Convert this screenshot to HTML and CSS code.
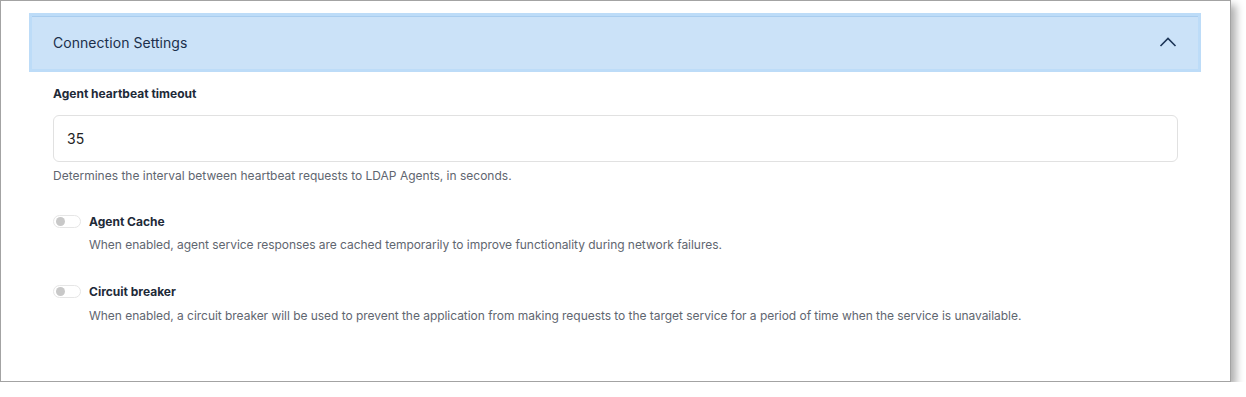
FILE: index.html
```html
<!DOCTYPE html>
<html>
<head>
<meta charset="utf-8">
<link rel="stylesheet" href="styles.css">
</head>
<body>
<div class="frame">
  <div class="panel">
    <div class="header">
      <span class="title">Connection Settings</span>
      <svg class="chevron" width="18" height="12" viewBox="0 0 18 12"><path d="M1.5 10 L9 2.5 L16.5 10" fill="none" stroke="#1d3557" stroke-width="1.6"/></svg>
    </div>
    <div class="body">
      <div class="label">Agent heartbeat timeout</div>
      <div class="input">35</div>
      <div class="help">Determines the interval between heartbeat requests to LDAP Agents, in seconds.</div>
      <div class="toggle-row">
        <div class="toggle-line">
          <span class="switch"><span class="knob"></span></span>
          <span class="toggle-label">Agent Cache</span>
        </div>
        <div class="toggle-desc">When enabled, agent service responses are cached temporarily to improve functionality during network failures.</div>
      </div>
      <div class="toggle-row">
        <div class="toggle-line">
          <span class="switch"><span class="knob"></span></span>
          <span class="toggle-label">Circuit breaker</span>
        </div>
        <div class="toggle-desc">When enabled, a circuit breaker will be used to prevent the application from making requests to the target service for a period of time when the service is unavailable.</div>
      </div>
    </div>
  </div>
</div>
</body>
</html>
```

FILE: styles.css
```css
html, body {
  margin: 0;
  padding: 0;
  background: #ffffff;
}
body {
  font-family: Inter, "Noto Sans", sans-serif;
}
.frame {
  width: 1231px;
  height: 382px;
  box-sizing: border-box;
  border: 1px solid #a3a3a3;
  background: #fff;
  box-shadow: 5px 5px 8px rgba(0,0,0,0.32);
  padding: 12px 0 0 28px;
}
.panel {
  width: 1172px;
}
.header {
  height: 59px;
  box-sizing: border-box;
  background: #cbe2f8;
  border: 3px solid #bddcf8;
  box-shadow: inset 0 1px 0 #a9cdef;
  display: flex;
  align-items: center;
  justify-content: space-between;
  padding: 0 21px 0 21px;
}
.title {
  font-size: 14px;
  color: #1b2f4b;
  letter-spacing: 0.05px;
}
.chevron {
  display: block;
  margin-top: -1px;
}
.body {
  padding: 14px 23px 0 24px;
}
.label {
  font-size: 12px;
  font-weight: 700;
  color: #1e2a38;
  line-height: 16px;
}
.input {
  margin-top: 13px;
  height: 47px;
  box-sizing: border-box;
  border: 1px solid #e1e1e1;
  border-radius: 6px;
  padding: 0 13px;
  display: flex;
  align-items: center;
  font-size: 14px;
  color: #222;
}
.help {
  margin-top: 6px;
  font-size: 12px;
  color: #5f6670;
  line-height: 16px;
}
.toggle-row {
  margin-top: 29px;
}
.toggle-row + .toggle-row {
  margin-top: 30px;
}
.toggle-row + .toggle-row .toggle-desc {
  margin-top: 9px;
}
.toggle-line {
  display: flex;
  align-items: center;
  gap: 8px;
  height: 16px;
}
.switch {
  width: 24px;
  height: 11px;
  border: 1px solid #e6e6e6;
  border-radius: 7px;
  background: #fff;
  display: flex;
  align-items: center;
  padding-left: 2px;
}
.knob {
  width: 9px;
  height: 9px;
  border-radius: 50%;
  background: #c8c8c8;
}
.toggle-label {
  font-size: 12px;
  font-weight: 700;
  color: #1e2a38;
}
.toggle-desc {
  margin-top: 8px;
  padding-left: 36px;
  font-size: 12px;
  color: #5f6670;
  line-height: 16px;
  letter-spacing: -0.04px;
}
```
